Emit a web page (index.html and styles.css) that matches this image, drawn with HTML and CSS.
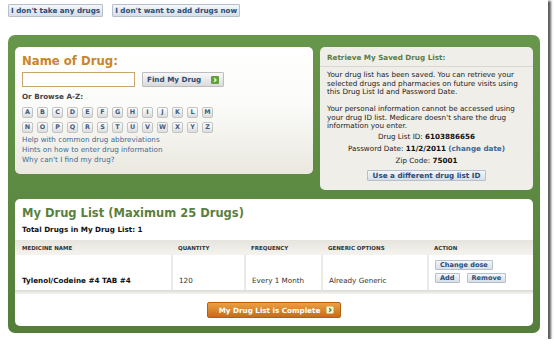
FILE: index.html
```html
<!DOCTYPE html>
<html lang="en">
<head>
<meta charset="utf-8">
<title>My Drug List</title>
<link rel="stylesheet" href="styles.css">
</head>
<body>
<div class="frame">
  <div class="top-actions">
    <button class="btn btn-top">I don't take any drugs</button>
    <button class="btn btn-top">I don't want to add drugs now</button>
  </div>
  <div class="green">
    <div class="upper">
      <div class="panel search">
        <h1 class="drug-title">Name of Drug:</h1>
        <div class="search-row">
          <input class="drug-input" type="text">
          <button class="btn-grey find">Find My Drug
            <svg class="go" viewBox="0 0 8 8" width="8" height="8"><rect width="8" height="8" rx="1" fill="#62a23a"/><path d="M3.2 2.2l1.8 1.8-1.8 1.8" fill="none" stroke="#f4f8e8" stroke-width="1.3"/></svg>
          </button>
        </div>
        <div class="browse-label">Or Browse A-Z:</div>
        <div class="letters">
          <button class="letter">A</button><button class="letter">B</button><button class="letter">C</button><button class="letter">D</button><button class="letter">E</button><button class="letter">F</button><button class="letter">G</button><button class="letter">H</button><button class="letter">I</button><button class="letter">J</button><button class="letter">K</button><button class="letter">L</button><button class="letter">M</button>
        </div>
        <div class="letters second">
          <button class="letter">N</button><button class="letter">O</button><button class="letter">P</button><button class="letter">Q</button><button class="letter">R</button><button class="letter">S</button><button class="letter">T</button><button class="letter">U</button><button class="letter">V</button><button class="letter">W</button><button class="letter">X</button><button class="letter">Y</button><button class="letter">Z</button>
        </div>
        <ul class="links">
          <li><a href="#">Help with common drug abbreviations</a></li>
          <li><a href="#">Hints on how to enter drug information</a></li>
          <li><a href="#">Why can't I find my drug?</a></li>
        </ul>
      </div>
      <div class="panel retrieve">
        <div class="retrieve-head">Retrieve My Saved Drug List:</div>
        <div class="retrieve-body">
          <p>Your drug list has been saved. You can retrieve your selected drugs and pharmacies on future visits using this Drug List Id and Password Date.</p>
          <p>Your personal information cannot be accessed using your drug ID list. Medicare doesn't share the drug information you enter.</p>
          <div class="ids">
            <div>Drug List ID: <b>6103886656</b></div>
            <div>Password Date: <b>11/2/2011</b> <a href="#" class="change">(change date)</a></div>
            <div>Zip Code: <b>75001</b></div>
          </div>
          <div class="use-row"><button class="btn btn-use">Use a different drug list ID</button></div>
        </div>
      </div>
    </div>
    <div class="panel list">
      <h2 class="list-title">My Drug List (Maximum 25 Drugs)</h2>
      <div class="total">Total Drugs in My Drug List: 1</div>
      <table class="drug-table">
        <colgroup>
          <col class="c-name"><col class="c-qty"><col class="c-freq"><col class="c-gen"><col class="c-act">
        </colgroup>
        <thead>
          <tr><th>Medicine Name</th><th>Quantity</th><th>Frequency</th><th>Generic Options</th><th>Action</th></tr>
        </thead>
        <tbody>
          <tr>
            <td class="name">Tylenol/Codeine #4 TAB #4</td>
            <td>120</td>
            <td>Every 1 Month</td>
            <td>Already Generic</td>
            <td class="action">
              <div class="act-row"><button class="btn btn-small">Change dose</button></div>
              <div class="act-row"><button class="btn btn-small">Add</button><button class="btn btn-small">Remove</button></div>
            </td>
          </tr>
        </tbody>
      </table>
      <div class="table-foot"></div>
      <div class="complete-row">
        <button class="btn-orange">My Drug List is Complete
          <svg class="go" viewBox="0 0 8 8" width="8" height="8"><rect x="0.5" y="0.5" width="7" height="7" rx="1" fill="#f1f4cf" stroke="#c9d48a" stroke-width="0.6"/><path d="M3.2 2.2l1.8 1.8-1.8 1.8" fill="none" stroke="#4f8a2a" stroke-width="1.3"/></svg>
        </button>
      </div>
    </div>
  </div>
</div>
</body>
</html>
```

FILE: styles.css
```css
* { box-sizing: border-box; }
html, body { margin: 0; padding: 0; background: #fff; }
body {
  font-family: "DejaVu Sans", Verdana, sans-serif;
  font-size: 7.2px;
  line-height: 10px;
  color: #222;
}
button, input { font-family: inherit; margin: 0; }
a { text-decoration: none; }

.frame {
  width: 548px;
  height: 339px;
  background: #fff;
  box-shadow: 2px 2px 2px 1px rgba(40, 40, 40, 0.75);
  padding: 4px 0 0 8px;
}

.top-actions { display: flex; gap: 9px; height: 31px; align-items: flex-start; }

.btn {
  font-weight: bold;
  font-size: 7.2px;
  color: #2b4c77;
  border: 1px solid #b5c0cc;
  background: linear-gradient(#f4f7fa, #d6dee7);
  border-radius: 1px;
  padding: 0 2px;
  cursor: pointer;
}
.btn-top { height: 13px; line-height: 11px; }

.green {
  width: 532px;
  height: 298px;
  background: linear-gradient(#67974a, #547e3a);
  border-radius: 7px;
  padding: 12px 7px 7px;
}

.upper { display: flex; gap: 7px; align-items: flex-start; }
.panel { border-radius: 5px; }

.search {
  width: 298px;
  background: linear-gradient(#ffffff, #fbfbf9 45%, #eae8df);
  padding: 7px 7px 9px;
}
.drug-title {
  margin: 0;
  font-size: 11.7px;
  line-height: 14px;
  font-weight: bold;
  color: #c8862c;
}
.search-row { display: flex; gap: 7px; margin-top: 4px; height: 15px; }
.drug-input {
  width: 113px;
  height: 15px;
  border: 1px solid #c9a66e;
  background: #fff;
  padding: 0 2px;
}
.btn-grey {
  border: 1px solid #bdbdbd;
  background: linear-gradient(#f9f9f9, #dadada);
  color: #2d4b70;
  font-weight: bold;
  font-size: 7.2px;
  border-radius: 1px;
}
.find {
  width: 82px;
  height: 15px;
  display: flex;
  align-items: center;
  justify-content: space-between;
  padding: 0 4px 0 4px;
}
.go { display: block; flex: none; }

.browse-label { margin-top: 5px; font-weight: bold; color: #444; }
.letters { display: flex; gap: 4px; margin-top: 5px; }
.letters.second { margin-top: 4px; }
.letter {
  width: 11px;
  height: 11px;
  padding: 0;
  font-size: 6.4px;
  line-height: 9px;
  font-weight: bold;
  color: #3b5d84;
  background: linear-gradient(#ffffff, #dcdcdc);
  border: 1px solid #c3c3c3;
  border-radius: 2px;
  text-align: center;
}
.links { list-style: none; margin: 2px 0 0; padding: 0; }
.links a { color: #3d6a96; }

.retrieve {
  width: 213px;
  height: 143px;
  background: #efeee8;
}
.retrieve-head {
  padding: 6px 7px 3px;
  font-weight: bold;
  color: #5c7c45;
  border-bottom: 1px solid #d9d7cd;
}
.retrieve-body { padding: 4px 7px 0; }
.retrieve-body p { margin: 0 0 8.5px; line-height: 8.5px; }
.retrieve-body p + p { margin-bottom: 0; }
.ids { text-align: center; line-height: 12px; }
.ids b { color: #111; }
.change { color: #3a6a9a; font-weight: bold; }
.use-row { display: flex; justify-content: center; margin-top: 3.5px; }
.btn-use { height: 11px; line-height: 9px; padding: 0 5px; }

.list {
  margin-top: 9px;
  height: 127px;
  background: #fff;
  padding-top: 7px;
}
.list-title {
  margin: 0 7px;
  font-size: 11.5px;
  line-height: 14px;
  font-weight: bold;
  color: #5b7f3c;
}
.total { margin: 5px 7px 0; font-weight: bold; color: #111; }

.drug-table {
  width: 100%;
  border-collapse: collapse;
  margin-top: 5px;
  table-layout: fixed;
}
.c-name { width: 157px; }
.c-qty { width: 73px; }
.c-freq { width: 77px; }
.c-gen { width: 106px; }
.c-act { width: 105px; }
.drug-table th {
  height: 15px;
  padding: 0 0 0 6px;
  background: linear-gradient(#e5e4dd, #f4f3ef);
  font-size: 5.5px;
  font-weight: bold;
  text-align: left;
  text-transform: uppercase;
  color: #333;
}
.drug-table th:first-child { padding-left: 7px; }
.drug-table td {
  height: 35px;
  padding: 0 0 4px 6px;
  vertical-align: bottom;
  border-left: 2px solid #ebebe6;
  color: #333;
}
.drug-table td:first-child { border-left: 0; padding-left: 7px; }
.drug-table td.name { font-weight: bold; color: #111; }
.drug-table td.action { vertical-align: top; padding-top: 5px; padding-bottom: 0; }
.act-row { display: flex; gap: 7px; margin-bottom: 3px; }
.btn-small { height: 10px; line-height: 8px; font-size: 6.6px; padding: 0 4px; }

.table-foot { height: 4px; background: linear-gradient(#dadad4, #f5f5f1); }

.complete-row { display: flex; justify-content: center; margin-top: 8px; }
.btn-orange {
  height: 16px;
  display: flex;
  align-items: center;
  gap: 6px;
  padding: 0 6px 0 11px;
  border: 1px solid #b5600f;
  border-radius: 2px;
  background: linear-gradient(#eba044, #c86c14);
  color: #fff;
  font-weight: bold;
  font-size: 7.2px;
}
```
